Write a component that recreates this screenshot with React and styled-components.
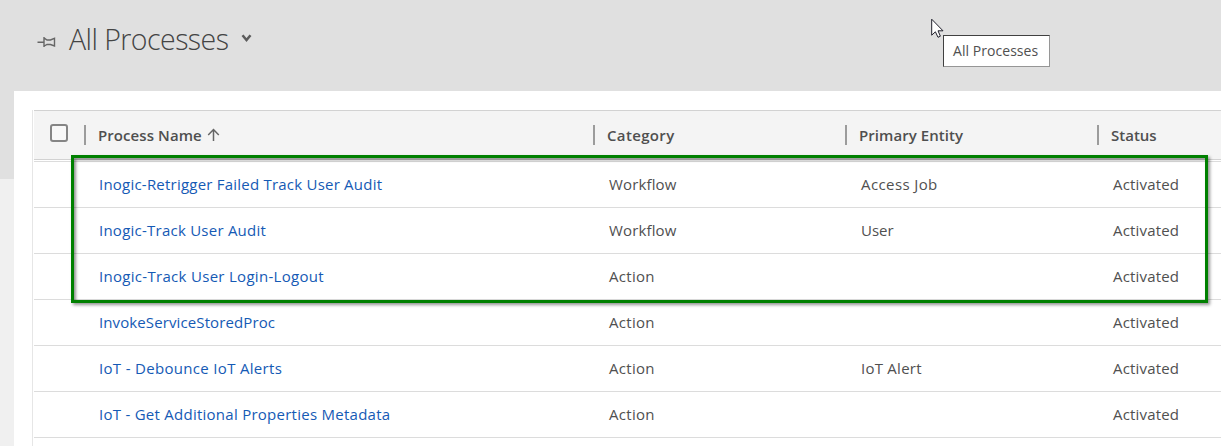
import React from "react";
import styled, { createGlobalStyle } from "styled-components";

const Global = createGlobalStyle`
  * { box-sizing: border-box; }
  body { margin: 0; background: #f0f0f0; font-family: "Open Sans", "Noto Sans", sans-serif; }
`;

const Page = styled.div`
  position: relative;
  width: 1221px;
  height: 446px;
  overflow: hidden;
  display: flex;
  flex-direction: column;
  background: linear-gradient(#e0e0e0 179px, #f0f0f0 179px);
`;

const TitleBar = styled.header`
  height: 91px;
  flex: none;
  display: flex;
  align-items: flex-start;
  padding: 19px 0 0 37px;
`;

const PinIcon = styled.svg`
  width: 19px;
  height: 12px;
  margin-top: 17px;
`;

const Title = styled.h1`
  margin: 0 0 0 13px;
  width: 160px;
  white-space: nowrap;
  font-size: 28.5px;
  font-weight: 300;
  line-height: 40px;
  letter-spacing: ${(p) => p.$spacing}px;
  color: #444;
`;

const ChevronIcon = styled.svg`
  width: 11px;
  height: 9px;
  margin: 15px 0 0 12px;
`;

const Sheet = styled.main`
  flex: 1;
  margin-left: 14px;
  padding: 19px 0 0 18px;
  background: #fff;
`;

const Grid = styled.section`
  height: 100%;
  padding-left: 1px;
  border-left: 1px solid #e6e6e6;
`;

const HeaderRow = styled.div`
  height: 50px;
  display: flex;
  align-items: center;
  background: #f4f4f4;
  border-top: 1px solid #d2d2d2;
  border-bottom: 1px solid #d2d2d2;
`;

const SelectAll = styled.div`
  width: 50px;
  height: 48px;
  padding: 13px 0 0 16px;
`;

const CheckBox = styled.div`
  width: 18px;
  height: 18px;
  border: 2px solid #858585;
  border-radius: 3px;
  background: #f8f8f8;
`;

const HeaderCell = styled.div`
  width: ${(p) => p.$width}px;
  height: 20px;
  flex: none;
  display: flex;
  align-items: center;
  padding-left: 12px;
  border-left: 2px solid #9c9c9c;
  white-space: nowrap;
  font-size: 15px;
  font-weight: 600;
  letter-spacing: ${(p) => p.$spacing}px;
  color: #4f4f4f;
`;

const SortIcon = styled.svg`
  width: 13px;
  height: 14px;
  margin-left: 5px;
`;

const Rows = styled.div`
  margin-top: 1px;
  border-top: 1px solid #dcdcdc;
`;

const Row = styled.div`
  height: 46px;
  display: flex;
  align-items: center;
  padding: 0 0 2px 65px;
  border-bottom: 1px solid #dcdcdc;
`;

const Cell = styled.div`
  width: ${(p) => p.$width}px;
  flex: none;
  white-space: nowrap;
  font-size: 15px;
  line-height: 20px;
  letter-spacing: ${(p) => p.$spacing || 0}px;
  color: ${(p) => (p.$link ? "#155ab5" : "#505050")};
`;

const Highlight = styled.div`
  position: absolute;
  left: 71px;
  top: 155px;
  width: 1137px;
  height: 148px;
  border: 3px solid #008000;
  box-shadow: 2px 2px 3px rgba(0, 0, 0, 0.42), inset 2px 2px 3px rgba(0, 0, 0, 0.42);
`;

const Tooltip = styled.div`
  position: absolute;
  left: 943px;
  top: 35px;
  width: 107px;
  height: 32px;
  padding-left: 9px;
  border: 1px solid;
  border-color: #404040 #969696 #969696 #404040;
  background: #fff;
  font-size: 14px;
  line-height: 30px;
  letter-spacing: ${(p) => p.$spacing}px;
  white-space: nowrap;
  color: #505050;
`;

const Pointer = styled.svg`
  position: absolute;
  left: 931px;
  top: 18px;
  width: 13px;
  height: 21px;
`;

const columns = [
  { label: "Process Name", width: 509, spacing: 0.08, sorted: true },
  { label: "Category", width: 252, spacing: 0.35 },
  { label: "Primary Entity", width: 252, spacing: 0.06 },
  { label: "Status", width: 124, spacing: 0 },
];

const processes = [
  { name: "Inogic-Retrigger Failed Track User Audit", spacing: 0.22, category: "Workflow", entity: "Access Job" },
  { name: "Inogic-Track User Audit", spacing: 0.24, category: "Workflow", entity: "User" },
  { name: "Inogic-Track User Login-Logout", spacing: 0.3, category: "Action", entity: "" },
  { name: "InvokeServiceStoredProc", spacing: 0.11, category: "Action", entity: "" },
  { name: "IoT - Debounce IoT Alerts", spacing: 0.32, category: "Action", entity: "IoT Alert" },
  { name: "IoT - Get Additional Properties Metadata", spacing: 0.26, category: "Action", entity: "" },
];

const spacings = { Workflow: 0.15, Action: 0.3, "Access Job": 0.4, User: 0, "IoT Alert": 0.25 };

export default function App() {
  return (
    <Page>
      <Global />
      <TitleBar>
        <PinIcon viewBox="0 0 19 12" fill="none" stroke="#666" strokeWidth="1.4">
          <path d="M0.5 6.2H6.5M7 1v10M7.3 2.2L10 4H13.5L17.5 2.3V10L13.5 8.5H10L7.3 10" />
        </PinIcon>
        <Title $spacing={-0.55}>All Processes</Title>
        <ChevronIcon viewBox="0 0 11 9" fill="none" stroke="#5c5c5c" strokeWidth="2.5">
          <path d="M1.5 1.2L5.5 6L9.5 1.2" />
        </ChevronIcon>
      </TitleBar>
      <Sheet>
        <Grid>
          <HeaderRow>
            <SelectAll><CheckBox /></SelectAll>
            {columns.map((c) => (
              <HeaderCell key={c.label} $width={c.width} $spacing={c.spacing}>
                {c.label}
                {c.sorted && (
                  <SortIcon viewBox="0 0 13 14" fill="none" stroke="#666" strokeWidth="1.5">
                    <path d="M6.5 13V1.5M1.2 7L6.5 1.5L11.8 7" />
                  </SortIcon>
                )}
              </HeaderCell>
            ))}
          </HeaderRow>
          <Rows>
            {processes.map((p) => (
              <Row key={p.name}>
                <Cell $width={510} $link $spacing={p.spacing}>{p.name}</Cell>
                <Cell $width={252} $spacing={spacings[p.category]}>{p.category}</Cell>
                <Cell $width={252} $spacing={spacings[p.entity]}>{p.entity}</Cell>
                <Cell $width={100} $spacing={0.17}>Activated</Cell>
              </Row>
            ))}
          </Rows>
        </Grid>
      </Sheet>
      <Highlight />
      <Tooltip $spacing={0.05}>All Processes</Tooltip>
      <Pointer viewBox="0 0 13 21" fill="#fff" stroke="#20202c" strokeWidth="1">
        <path d="M0.7 1.2V17.2L4.4 13.8L7 19.3L9.4 18.2L7 12.8H12Z" />
      </Pointer>
    </Page>
  );
}
